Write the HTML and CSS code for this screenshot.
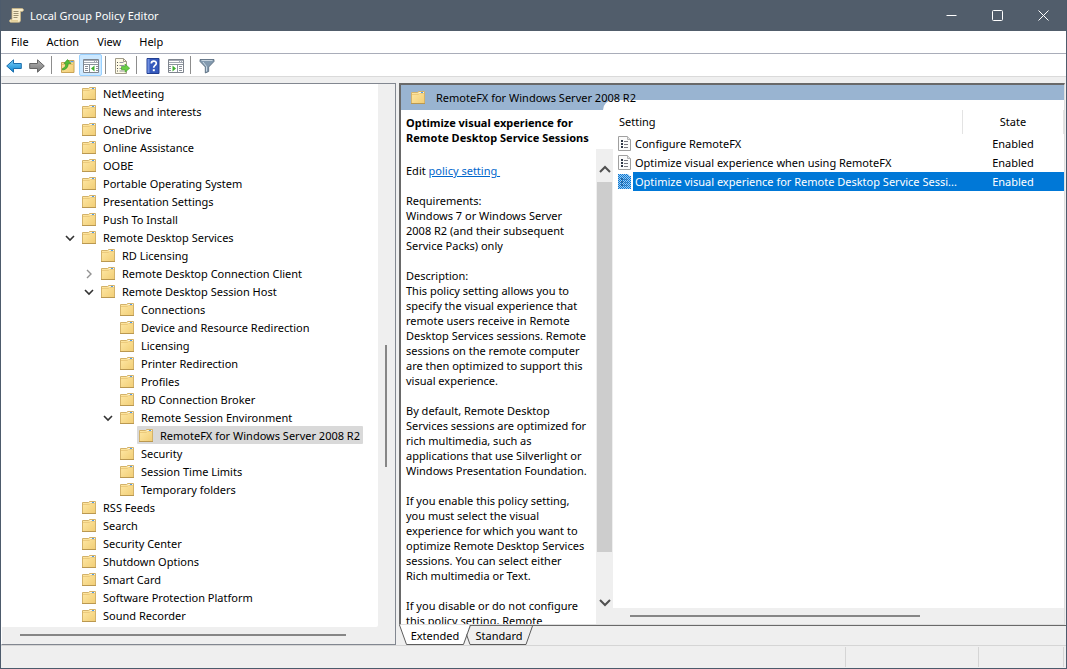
FILE: index.html
```html
<!DOCTYPE html>
<html lang="en">
<head>
<meta charset="utf-8">
<title>Local Group Policy Editor</title>
<link rel="stylesheet" href="styles.css">
</head>
<body>
<svg class="defs" aria-hidden="true">
  <defs>
    <linearGradient id="gold" x1="0" y1="0" x2="1" y2="1"><stop offset="0" stop-color="#ffe9a6"/><stop offset="1" stop-color="#f1cd75"/></linearGradient>
    <linearGradient id="blue" x1="0" y1="0" x2="0" y2="1"><stop offset="0" stop-color="#7fd0f7"/><stop offset="1" stop-color="#0a84d2"/></linearGradient>
    <linearGradient id="grey" x1="0" y1="0" x2="0" y2="1"><stop offset="0" stop-color="#b5b5b5"/><stop offset="1" stop-color="#777"/></linearGradient>
  </defs>
  <symbol id="folder" viewBox="0 0 14 13">
    <path d="M.5 12.500V1.500h6l1-1h6v12z" fill="url(#gold)" stroke="#d3b26a"/>
    <path d="M8 1h5v2H8z" fill="#f8f4e4"/><path d="M10 1h2v1h-2z" fill="#4f9be8"/>
    <path d="M1 3.500h6.500l1-1H13" fill="none" stroke="#ecca7c"/>
    <path d="M0 12.500h14" stroke="#ba9850"/>
  </symbol>
  <symbol id="sheet" viewBox="0 0 13 15">
    <path d="M.5.5h9l3 3v11H.5z" fill="#fbfbfb" stroke="#a0a0a0"/><path d="M9.500.5v3h3" fill="#e4e4e4" stroke="#b4b4b4"/>
    <path d="M3 4h2v2H3zM3 7h2v2H3zM3 10h2v2H3z" fill="#303848"/><path d="M6 5.500h4M6 8.500h4M6 11.500h4" stroke="#77777f"/>
  </symbol>
  <symbol id="sheet-selected" viewBox="0 0 13 15">
    <path d="M0 0h10l3 3v12H0z" fill="#9ccbf0"/>
    <path d="M0 .5h10M0 2.500h13M0 4.500h13M0 6.500h13M0 8.500h13M0 10.500h13M0 12.500h13M0 14.500h13" stroke="#0b78d4" stroke-dasharray="1 1"/>
    <path d="M1 1.500h10M1 3.500h12M1 5.500h12M1 7.500h12M1 9.500h12M1 11.500h12M1 13.500h12" stroke="#0b78d4" stroke-dasharray="1 1"/>
    <path d="M3 4h2v2H3zM3 7h2v2H3zM3 10h2v2H3z" fill="#12508c" fill-opacity=".7"/>
    <path d="M6 5.500h4M6 8.500h4M6 11.500h4" stroke="#2a6cab" stroke-opacity=".6"/>
  </symbol>
  <symbol id="down" viewBox="0 0 10 10"><path d="M1 3l4 4 4-4" fill="none" stroke="#333" stroke-width="1.600"/></symbol>
  <symbol id="right" viewBox="0 0 10 10"><path d="M3 1l4 4-4 4" fill="none" stroke="#929292" stroke-width="1.400"/></symbol>
  <symbol id="arrow" viewBox="0 0 16 14"><path d="M.7 7L7.500.8v3.700h7.800v5H7.500v3.700z"/></symbol>
</svg>

<div class="window">
  <header class="titlebar">
    <svg class="app-icon" viewBox="0 0 15 15" aria-hidden="true"><path d="M3 .5h10c2 0 2 3 0 3h-1.500V12c0 1.500-.7 2.300-2 2.300H2c-2 0-2-2.800 0-2.800h1z" fill="#f8edcb" stroke="#c9b481" stroke-width=".8"/><path d="M4.500 3.500h5M4.500 5.500h5M4.500 7.500h5M4.500 9.500h4" stroke="#9b9072"/><path d="M1.500 12h7.500v1.700H2z" fill="#e3cf98"/></svg>
    <h1 class="title">Local Group Policy Editor</h1>
    <button class="caption" aria-label="Minimize"><svg viewBox="0 0 11 11"><path d="M.5 5.500h10"/></svg></button>
    <button class="caption" aria-label="Maximize"><svg viewBox="0 0 11 11"><rect x=".5" y=".5" width="10" height="10" rx="1"/></svg></button>
    <button class="caption" aria-label="Close"><svg viewBox="0 0 11 11"><path d="M.5.5l10 10M10.500.5l-10 10"/></svg></button>
  </header>

  <nav class="menubar" aria-label="Menu">
    <button>File</button><button>Action</button><button>View</button><button>Help</button>
  </nav>

  <div class="toolbar" role="toolbar" aria-label="Tools">
    <button aria-label="Back"><svg class="wide" viewBox="0 0 16 14"><use href="#arrow" fill="url(#blue)" stroke="#1c6eac"/></svg></button>
    <button aria-label="Forward"><svg class="wide" viewBox="0 0 16 14"><g transform="matrix(-1 0 0 1 16 0)"><use href="#arrow" fill="url(#grey)" stroke="#666"/></g></svg></button>
    <span class="divider"></span>
    <button aria-label="Up one level"><svg viewBox="0 0 16 16"><path d="M1.500 14.500v-10h5l1.500-2h6v12z" fill="url(#gold)" stroke="#c9a457"/><path d="M2 6.500h12" stroke="#e5c16d"/><path d="M10.500 3h3v1.200h-3z" fill="#4f9be8"/><path d="M2.500 10.500c2.500-.5 3.200-2.500 3.200-5H4l3.500-4 3.500 4H8.200C8.200 9 6.500 11.500 2.500 12z" fill="#53bd36" stroke="#318b20" stroke-width=".6"/></svg></button>
    <button class="on" aria-label="Show console tree" aria-pressed="true"><svg viewBox="0 0 16 16"><path d="M.5 1.500h15v13H.5z" fill="#fff" stroke="#7f858e"/><path d="M1 2h14v3H1z" fill="#a4aab4"/><path d="M1 3.500h10M12 3.500h1M14 3.500h1" stroke="#fff"/><path d="M1 6.500h14M6.500 7v7" stroke="#8b929c"/><path d="M2 8.500h3M2 10.500h3M2 12.500h3M13 8.500h2M13 10.500h2M13 12.500h2" stroke="#8a9099"/><path d="M11.500 7.500v6L8 10.500z" fill="#3cae2e"/></svg></button>
    <span class="divider"></span>
    <button aria-label="Export list"><svg viewBox="0 0 16 16"><path d="M1.500.5h8l3 3v12h-11z" fill="#fffbe6" stroke="#a09b89"/><path d="M9.500.5v3h3" fill="none" stroke="#a09b89"/><path d="M3 4.500h1M3 7.500h1M3 10.500h1M3 13h1" stroke="#555"/><path d="M5.500 4.500h4M5.500 7.500h5M5.500 10.500h3M5.500 13h5" stroke="#9696a0"/><path d="M7.500 8.500H11V6l4.700 4.200L11 14.300v-2.600H7.500z" fill="#68cf43" stroke="#3b9b29" stroke-width=".6"/></svg></button>
    <span class="divider"></span>
    <button aria-label="Help"><svg viewBox="0 0 16 16"><path d="M2 .5h12v15H2z" fill="#3559bd" stroke="#223f91"/><path d="M2.500 1h2v14h-2z" fill="#6f8ede"/><path d="M6.300 5.500c0-3.300 5-3.100 5-.3 0 2.300-2.600 2.100-2.600 4.500" fill="none" stroke="#fff" stroke-width="1.700"/><path d="M7.800 11.200h2v2h-2z" fill="#fff"/></svg></button>
    <button aria-label="Show action pane"><svg viewBox="0 0 16 16"><path d="M.5 1.500h15v13H.5z" fill="#fff" stroke="#7f858e"/><path d="M1 2h14v3H1z" fill="#a4aab4"/><path d="M1 3.500h10M12 3.500h1M14 3.500h1" stroke="#fff"/><path d="M1 6.500h14M9.500 7v7" stroke="#8b929c"/><path d="M1 8.500h2M1 10.500h2M1 12.500h2M11 8.500h3M11 10.500h3M11 12.500h3" stroke="#8a9099"/><path d="M4.500 7.500v6L8 10.500z" fill="#3cae2e"/></svg></button>
    <span class="divider"></span>
    <button aria-label="Filter"><svg viewBox="0 0 16 16"><path d="M1 1.500h14v2L9.700 9v4.500L6.300 15V9L1 3.500z" fill="#8299ae" stroke="#536577" stroke-width=".8"/><path d="M2.500 2.500h11" stroke="#c7d4df"/><path d="M4 4l3.500 4.500v5" fill="none" stroke="#c9d8e4"/></svg></button>
  </div>

  <main class="workspace">
    <section class="tree-panel" aria-label="Console tree">
      <ul class="tree" role="tree">
        <li><span class="node"><svg class="folder"><use href="#folder"/></svg>NetMeeting</span></li>
        <li><span class="node"><svg class="folder"><use href="#folder"/></svg>News and interests</span></li>
        <li><span class="node"><svg class="folder"><use href="#folder"/></svg>OneDrive</span></li>
        <li><span class="node"><svg class="folder"><use href="#folder"/></svg>Online Assistance</span></li>
        <li><span class="node"><svg class="folder"><use href="#folder"/></svg>OOBE</span></li>
        <li><span class="node"><svg class="folder"><use href="#folder"/></svg>Portable Operating System</span></li>
        <li><span class="node"><svg class="folder"><use href="#folder"/></svg>Presentation Settings</span></li>
        <li><span class="node"><svg class="folder"><use href="#folder"/></svg>Push To Install</span></li>
        <li><svg class="twist"><use href="#down"/></svg><span class="node"><svg class="folder"><use href="#folder"/></svg>Remote Desktop Services</span>
          <ul>
            <li><span class="node"><svg class="folder"><use href="#folder"/></svg>RD Licensing</span></li>
            <li><svg class="twist"><use href="#right"/></svg><span class="node"><svg class="folder"><use href="#folder"/></svg>Remote Desktop Connection Client</span></li>
            <li><svg class="twist"><use href="#down"/></svg><span class="node"><svg class="folder"><use href="#folder"/></svg>Remote Desktop Session Host</span>
              <ul>
                <li><span class="node"><svg class="folder"><use href="#folder"/></svg>Connections</span></li>
                <li><span class="node"><svg class="folder"><use href="#folder"/></svg>Device and Resource Redirection</span></li>
                <li><span class="node"><svg class="folder"><use href="#folder"/></svg>Licensing</span></li>
                <li><span class="node"><svg class="folder"><use href="#folder"/></svg>Printer Redirection</span></li>
                <li><span class="node"><svg class="folder"><use href="#folder"/></svg>Profiles</span></li>
                <li><span class="node"><svg class="folder"><use href="#folder"/></svg>RD Connection Broker</span></li>
                <li><svg class="twist"><use href="#down"/></svg><span class="node"><svg class="folder"><use href="#folder"/></svg>Remote Session Environment</span>
                  <ul>
                    <li><span class="node current"><svg class="folder"><use href="#folder"/></svg>RemoteFX for Windows Server 2008 R2</span></li>
                  </ul>
                </li>
                <li><span class="node"><svg class="folder"><use href="#folder"/></svg>Security</span></li>
                <li><span class="node"><svg class="folder"><use href="#folder"/></svg>Session Time Limits</span></li>
                <li><span class="node"><svg class="folder"><use href="#folder"/></svg>Temporary folders</span></li>
              </ul>
            </li>
          </ul>
        </li>
        <li><span class="node"><svg class="folder"><use href="#folder"/></svg>RSS Feeds</span></li>
        <li><span class="node"><svg class="folder"><use href="#folder"/></svg>Search</span></li>
        <li><span class="node"><svg class="folder"><use href="#folder"/></svg>Security Center</span></li>
        <li><span class="node"><svg class="folder"><use href="#folder"/></svg>Shutdown Options</span></li>
        <li><span class="node"><svg class="folder"><use href="#folder"/></svg>Smart Card</span></li>
        <li><span class="node"><svg class="folder"><use href="#folder"/></svg>Software Protection Platform</span></li>
        <li><span class="node"><svg class="folder"><use href="#folder"/></svg>Sound Recorder</span></li>
      </ul>
      <div class="tree-vbar"><span class="thumb"></span></div>
      <div class="tree-hbar"><span class="thumb"></span></div>
    </section>

    <div class="detail">
      <section class="result" aria-label="Policy details">
        <header class="banner">
          <svg class="folder"><use href="#folder"/></svg>
          <h2>RemoteFX for Windows Server 2008 R2</h2>
        </header>
        <div class="panes">
          <article class="info">
            <h3>Optimize visual experience for Remote Desktop Service Sessions</h3>
            <p class="edit">Edit <a href="#">policy setting </a></p>
            <p>Requirements:<br>Windows 7 or Windows Server<br>2008 R2 (and their subsequent Service Packs) only</p>
            <p>Description:<br>This policy setting allows you to specify the visual experience that remote users receive in Remote Desktop Services sessions. Remote sessions on the remote computer are then optimized to support this visual experience.</p>
            <p>By default, Remote Desktop Services sessions are optimized for rich multimedia, such as applications that use Silverlight or Windows Presentation Foundation.</p>
            <p>If you enable this policy setting, you must select the visual experience for which you want to optimize Remote Desktop Services sessions. You can select either<br>Rich multimedia or Text.</p>
            <p>If you disable or do not configure this policy setting, Remote</p>
          </article>
          <div class="info-bar">
            <svg viewBox="0 0 12 10"><path d="M1 8l5-5 5 5"/></svg>
            <span class="thumb"></span>
            <svg viewBox="0 0 12 10"><path d="M1 2l5 5 5-5"/></svg>
          </div>
          <div class="list">
            <table>
              <colgroup><col><col class="state-col"></colgroup>
              <thead><tr><th scope="col">Setting</th><th scope="col">State</th></tr></thead>
              <tbody>
                <tr><td><div class="cell"><svg class="sheet"><use href="#sheet"/></svg><span class="name">Configure RemoteFX</span></div></td><td>Enabled</td></tr>
                <tr><td><div class="cell"><svg class="sheet"><use href="#sheet"/></svg><span class="name">Optimize visual experience when using RemoteFX</span></div></td><td>Enabled</td></tr>
                <tr class="selected"><td><div class="cell"><svg class="sheet"><use href="#sheet-selected"/></svg><span class="name">Optimize visual experience for Remote Desktop Service Sessi...</span></div></td><td>Enabled</td></tr>
              </tbody>
            </table>
            <div class="list-bar"><span class="thumb"></span></div>
          </div>
        </div>
      </section>
      <div class="tabs" role="tablist">
        <button class="tab active" role="tab" aria-selected="true"><svg viewBox="0 0 72 20" aria-hidden="true"><path d="M0 0l7 19h57l7-19" fill="#fff"/><path d="M.5 0l7 19.500h57L71.500 0"/></svg><span>Extended</span></button>
        <button class="tab" role="tab" aria-selected="false"><svg viewBox="0 0 68 19" aria-hidden="true"><path d="M4 0L1 7l4 11.500h56L67.500 0"/></svg><span>Standard</span></button>
      </div>
    </div>
  </main>

  <footer class="status"><span></span><span></span><span></span></footer>
</div>
</body>
</html>
```
FILE: styles.css
```css
* { box-sizing: border-box; }

body {
  margin: 0;
  background: #efefef;
  color: #000;
  font: 11px/15px "Noto Sans", "Open Sans", sans-serif;
}

h1, h2, h3, p, ul { margin: 0; padding: 0; font-size: 11px; font-weight: 400; }
ul { list-style: none; }
button { margin: 0; padding: 0; border: 0; background: none; color: inherit; font: inherit; }
svg { display: block; flex: none; }
.defs { position: absolute; width: 0; height: 0; }

.window {
  display: flex;
  flex-direction: column;
  height: 100vh;
  border: 1px solid #4d5b6c;
  border-top: 0;
}

.titlebar {
  display: flex;
  align-items: center;
  flex: none;
  height: 31px;
  padding-left: 8px;
  background: #515d6b;
  color: #fff;
}
.app-icon { width: 15px; height: 15px; margin-right: 6px; }
.title { flex: 1; }
.caption { display: flex; align-items: center; justify-content: center; width: 46px; height: 31px; }
.caption svg { width: 11px; height: 11px; fill: none; stroke: #fff; }

.menubar {
  display: flex;
  flex: none;
  gap: 18px;
  height: 23px;
  padding: 0 0 1px 10px;
  background: #fff;
  border-bottom: 1px solid #a9adb9;
}

.toolbar {
  display: flex;
  align-items: center;
  flex: none;
  height: 23px;
  padding-left: 1px;
  background: #fff;
  border-bottom: 1px solid #dadada;
}
.toolbar button { display: flex; align-items: center; justify-content: center; width: 23px; height: 22px; padding-top: 1px; }
.toolbar button.on { background: #cce8ff; border: 1px solid #99d1ff; border-radius: 2px; }
.toolbar svg { width: 16px; height: 16px; }
.toolbar svg.wide { height: 14px; }
.divider { width: 1px; height: 18px; margin: 0 4px 0 3px; background: #8d8d8d; }

.workspace { display: flex; flex: 1; gap: 3px; min-height: 0; padding-top: 6px; }

.tree-panel {
  display: grid;
  grid-template: minmax(0, 1fr) 17px / minmax(0, 1fr) 17px;
  flex: 0 0 395px;
  border: 1px solid #828790;
  border-left-color: #fff;
  background: #efefef;
}
.tree { overflow: hidden; padding: 0 0 0 80px; background: #fff; border-bottom-right-radius: 2px; }
.tree ul { padding-left: 19px; }
.tree li { position: relative; }
.node { display: inline-flex; align-items: center; gap: 7px; height: 18px; padding: 0 3px 0 0; white-space: nowrap; vertical-align: top; }
.node.current { margin-left: -2px; padding-left: 2px; background: #d9d9d9; border-radius: 1px; }
.folder { width: 14px; height: 13px; }
.twist { position: absolute; left: -17px; top: 5px; width: 10px; height: 10px; }
.thumb { display: block; background: #868686; }
.tree-vbar { padding: 261px 0 0 7px; }
.tree-vbar .thumb { width: 2px; height: 122px; }
.tree-hbar { display: flex; align-items: center; padding: 0 32px 2px 18px; }
.tree-hbar .thumb { flex: 1; height: 2px; }

.detail { display: flex; flex-direction: column; flex: 1; min-width: 0; }
.result {
  display: flex;
  flex-direction: column;
  flex: 1;
  min-height: 0;
  margin-right: 1px;
  border: 1px solid #dedede;
  border-top: 2px solid #696969;
  border-left: 2px solid #696969;
  background: #fff;
}
.banner {
  display: flex;
  align-items: center;
  position: relative;
  flex: none;
  gap: 11px;
  height: 25px;
  padding-left: 10px;
  background: #99b4d1;
}
.banner::after {
  content: "";
  position: absolute;
  inset: 15px 0 0 202px;
  background: #fff;
  border-top-left-radius: 10px;
}
.banner h2 { position: relative; z-index: 1; }

.panes { display: flex; flex: 1; min-height: 0; }
.info { flex: 0 0 195px; overflow: hidden; padding: 5px 0 0 5px; }
.info h3 { margin-bottom: 18px; font-weight: 700; }
.info p { margin-bottom: 15px; padding-right: 6px; }
.info a { color: #0066cc; white-space: pre; }
.info-bar {
  display: flex;
  flex-direction: column;
  align-items: center;
  flex: 0 0 17px;
  margin-top: 39px;
  padding: 15px 0 16px;
  background: #efefef;
}
.info-bar svg { width: 12px; height: 10px; fill: none; stroke: #505050; stroke-width: 2; }
.info-bar .thumb { width: 15px; height: 370px; margin: 8px 0 auto; background: #cdcdcd; }

.list { display: flex; flex-direction: column; flex: 1; justify-content: space-between; min-width: 0; }
.list table { width: 100%; table-layout: fixed; border-collapse: collapse; }
.state-col { width: 101px; }
.list th, .list td { height: 19px; padding: 0; font-weight: 400; text-align: center; }
.list th { height: 24px; padding-bottom: 2px; border-right: 1px solid #e3e3e3; }
.list th:first-child { padding-left: 6px; text-align: left; }
.cell { display: flex; align-items: center; padding-left: 5px; }
.sheet { width: 13px; height: 15px; }
.name { flex: 1; min-width: 0; margin-left: 2px; padding-left: 2px; line-height: 19px; text-align: left; white-space: nowrap; }
.selected .name, .selected td:last-child { background: #0078d7; color: #fff; }
.list-bar { display: flex; align-items: center; height: 16px; padding: 0 32% 0 17px; background: #efefef; }
.list-bar .thumb { flex: 1; height: 2px; }

.tabs { display: flex; flex: none; height: 20px; border-top: 1px solid #696969; }
.tab { position: relative; width: 68px; height: 19px; }
.tab svg { position: absolute; top: 0; left: 0; width: 68px; height: 19px; fill: #efefef; stroke: #5c5c5c; }
.tab.active { width: 72px; height: 20px; margin: -1px -6px 0 0; z-index: 1; }
.tab.active svg { width: 72px; height: 20px; fill: none; }
.tab.active svg path:first-child { fill: #fff; stroke: none; }
.tab span { position: relative; }

.status { display: flex; justify-content: flex-end; flex: none; height: 23px; padding: 1px 2px 1px 0; border-top: 1px solid #d5d5d5; }
.status span { border-right: 1px solid #d5d5d5; }
.status span:nth-child(2) { width: 133px; }
.status span:nth-child(3) { width: 85px; }
```
